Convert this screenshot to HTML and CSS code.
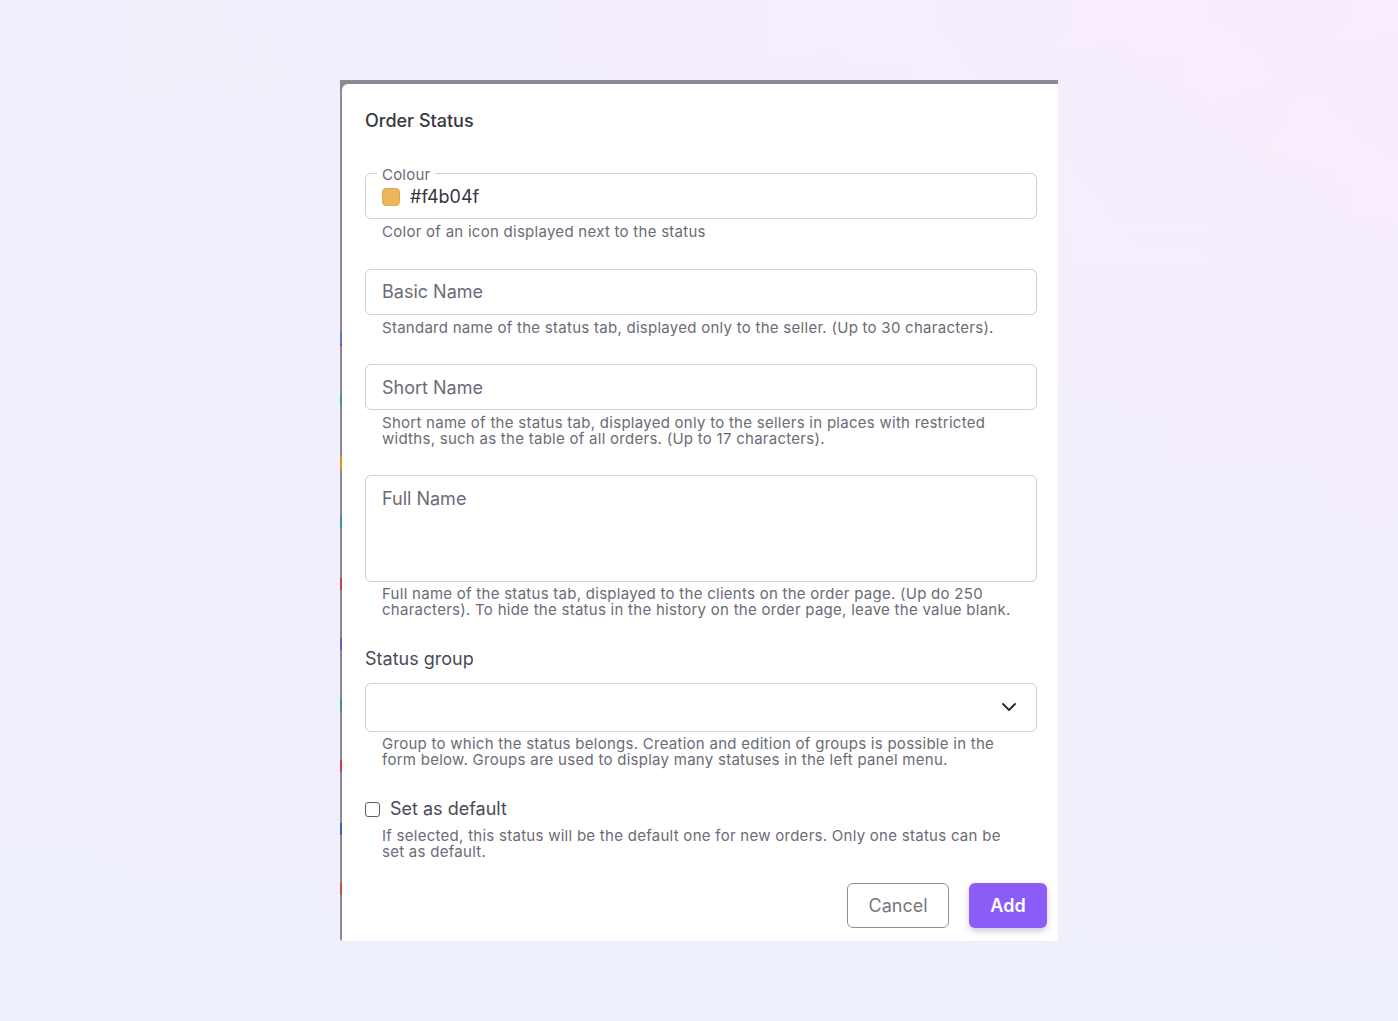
FILE: index.html
```html
<!DOCTYPE html>
<html lang="en">
<head>
<meta charset="utf-8">
<title>Order Status</title>
<link rel="stylesheet" href="styles.css">
</head>
<body>
<div class="frame">
  <div class="dialog">
    <h1 class="title">Order Status</h1>

    <div class="outlined colour-box">
      <span class="legend">Colour</span>
      <span class="swatch"></span>
      <span class="value">#f4b04f</span>
    </div>
    <p class="help">Color of an icon displayed next to the status</p>

    <div class="outlined input basic">Basic Name</div>
    <p class="help">Standard name of the status tab, displayed only to the seller. (Up to 30 characters).</p>

    <div class="outlined input short">Short Name</div>
    <p class="help">Short name of the status tab, displayed only to the sellers in places with restricted<br>widths, such as the table of all orders. (Up to 17 characters).</p>

    <div class="outlined textarea">Full Name</div>
    <p class="help help-full">Full name of the status tab, displayed to the clients on the order page. (Up do 250<br>characters). To hide the status in the history on the order page, leave the value blank.</p>

    <div class="group-label">Status group</div>
    <div class="outlined select">
      <svg class="chevron" width="16" height="10" viewBox="0 0 16 10"><path d="M2 2 L8 8 L14 2" fill="none" stroke="#2f2f3a" stroke-width="2" stroke-linecap="round" stroke-linejoin="round"/></svg>
    </div>
    <p class="help help-select">Group to which the status belongs. Creation and edition of groups is possible in the<br>form below. Groups are used to display many statuses in the left panel menu.</p>

    <label class="check-row"><span class="checkbox"></span><span>Set as default</span></label>
    <p class="help help-check">If selected, this status will be the default one for new orders. Only one status can be<br>set as default.</p>

    <div class="actions">
      <button class="btn btn-cancel">Cancel</button>
      <button class="btn btn-add">Add</button>
    </div>
  </div>
</div>
</body>
</html>
```

FILE: styles.css
```css
html, body {
  margin: 0;
  padding: 0;
}
body {
  min-height: 1021px;
  background: linear-gradient(180deg, rgba(238,240,252,0) 0%, #eef0fc 100%), linear-gradient(90deg, #f1effb 0%, #f5eefc 60%, #f9ecfc 100%);
  font-family: Inter, "Noto Sans", sans-serif;
  overflow: hidden;
}
.frame {
  width: 718px;
  margin: 80px auto 0;
  padding: 4px 0 0 2px;
  box-sizing: border-box;
  border-bottom-left-radius: 3px;
  background:
    linear-gradient(180deg,
      #8b8993 0px, #8b8993 252px,
      #4e7fc8 252px, #4e7fc8 264px, #8b8993 264px, #8b8993 253px,
      #c0404c 253px, #c0404c 266px, #8b8993 266px, #8b8993 314px,
      #3f9a86 314px, #3f9a86 326px, #8b8993 326px, #8b8993 375px,
      #d9902e 375px, #d9902e 390px, #8b8993 390px, #8b8993 436px,
      #3a9aa0 436px, #3a9aa0 448px, #8b8993 448px, #8b8993 498px,
      #c0404c 498px, #c0404c 510px, #8b8993 510px, #8b8993 558px,
      #6d5bc8 558px, #6d5bc8 570px, #8b8993 570px, #8b8993 619px,
      #3f9a70 619px, #3f9a70 631px, #8b8993 631px, #8b8993 680px,
      #c0404c 680px, #c0404c 692px, #8b8993 692px, #8b8993 743px,
      #3e62c0 743px, #3e62c0 755px, #8b8993 755px, #8b8993 803px,
      #c05040 803px, #c05040 815px, #8b8993 815px, #8b8993 100%);
}
.dialog {
  background: #ffffff;
  border-top-left-radius: 6px;
  height: 857px;
  box-sizing: border-box;
  padding: 26px 21px 0 23px;
  color: #6b6b77;
}
.title {
  margin: 0;
  font-size: 18px;
  line-height: 22px;
  font-weight: 500;
  color: #383845;
}
.outlined {
  border: 1px solid #cfcfd6;
  border-radius: 6px;
  box-sizing: border-box;
}
.colour-box {
  position: relative;
  margin-top: 41px;
  height: 46px;
  display: flex;
  align-items: center;
  padding: 2px 16px 0;
}
.legend {
  position: absolute;
  top: -8px;
  left: 11px;
  padding: 0 5px;
  background: #ffffff;
  font-size: 15px;
  line-height: 18px;
  letter-spacing: 0.2px;
  color: #6b6b77;
}
.swatch {
  width: 18px;
  height: 18px;
  border-radius: 4px;
  background: #ebb65c;
  border: 1px solid #e0a94f;
  box-sizing: border-box;
  margin-right: 10px;
}
.value {
  font-size: 18px;
  line-height: 22px;
  color: #34343f;
}
.help {
  margin: 5px 0 0 17px;
  font-size: 15px;
  line-height: 16px;
  letter-spacing: 0.27px;
  color: #6b6b77;
}
.input {
  height: 46px;
  margin-top: 29px;
  padding: 0 16px 1px;
  display: flex;
  align-items: center;
  font-size: 18px;
  color: #6b6b77;
}
.short {
  margin-top: 28px;
  padding-bottom: 0;
}
.textarea {
  height: 107px;
  margin-top: 28px;
  padding: 12px 16px 0;
  font-size: 18px;
  line-height: 22px;
  color: #6b6b77;
}
.help-full {
  margin-top: 4px;
}
.group-label {
  margin-top: 30px;
  font-size: 18px;
  line-height: 22px;
  color: #4a4a56;
}
.select {
  margin-top: 13px;
  height: 49px;
  display: flex;
  align-items: center;
  justify-content: flex-end;
  padding: 0 19px 2px 0;
}
.chevron {
  display: block;
}
.help-select {
  margin-top: 4px;
}
.check-row {
  display: flex;
  align-items: center;
  margin-top: 30px;
  font-size: 18px;
  line-height: 22px;
  color: #4a4a56;
}
.checkbox {
  width: 15px;
  height: 15px;
  box-sizing: border-box;
  border: 1.5px solid #5e5e68;
  border-radius: 3px;
  margin-right: 10px;
}
.help-check {
  margin-top: 8px;
}
.actions {
  display: flex;
  justify-content: flex-end;
  gap: 20px;
  margin-top: 23px;
  margin-right: -10px;
}
.btn {
  height: 45px;
  border-radius: 6px;
  font-family: Inter, "Noto Sans", sans-serif;
  font-size: 18px;
  box-sizing: border-box;
  cursor: pointer;
  padding: 0;
}
.btn-cancel {
  width: 102px;
  background: #ffffff;
  border: 1px solid #8f8f98;
  color: #777780;
}
.btn-add {
  width: 78px;
  background: #8b5cf6;
  border: none;
  color: #ffffff;
  font-weight: 600;
  box-shadow: 0 3px 6px rgba(60, 40, 120, 0.25);
}
```
